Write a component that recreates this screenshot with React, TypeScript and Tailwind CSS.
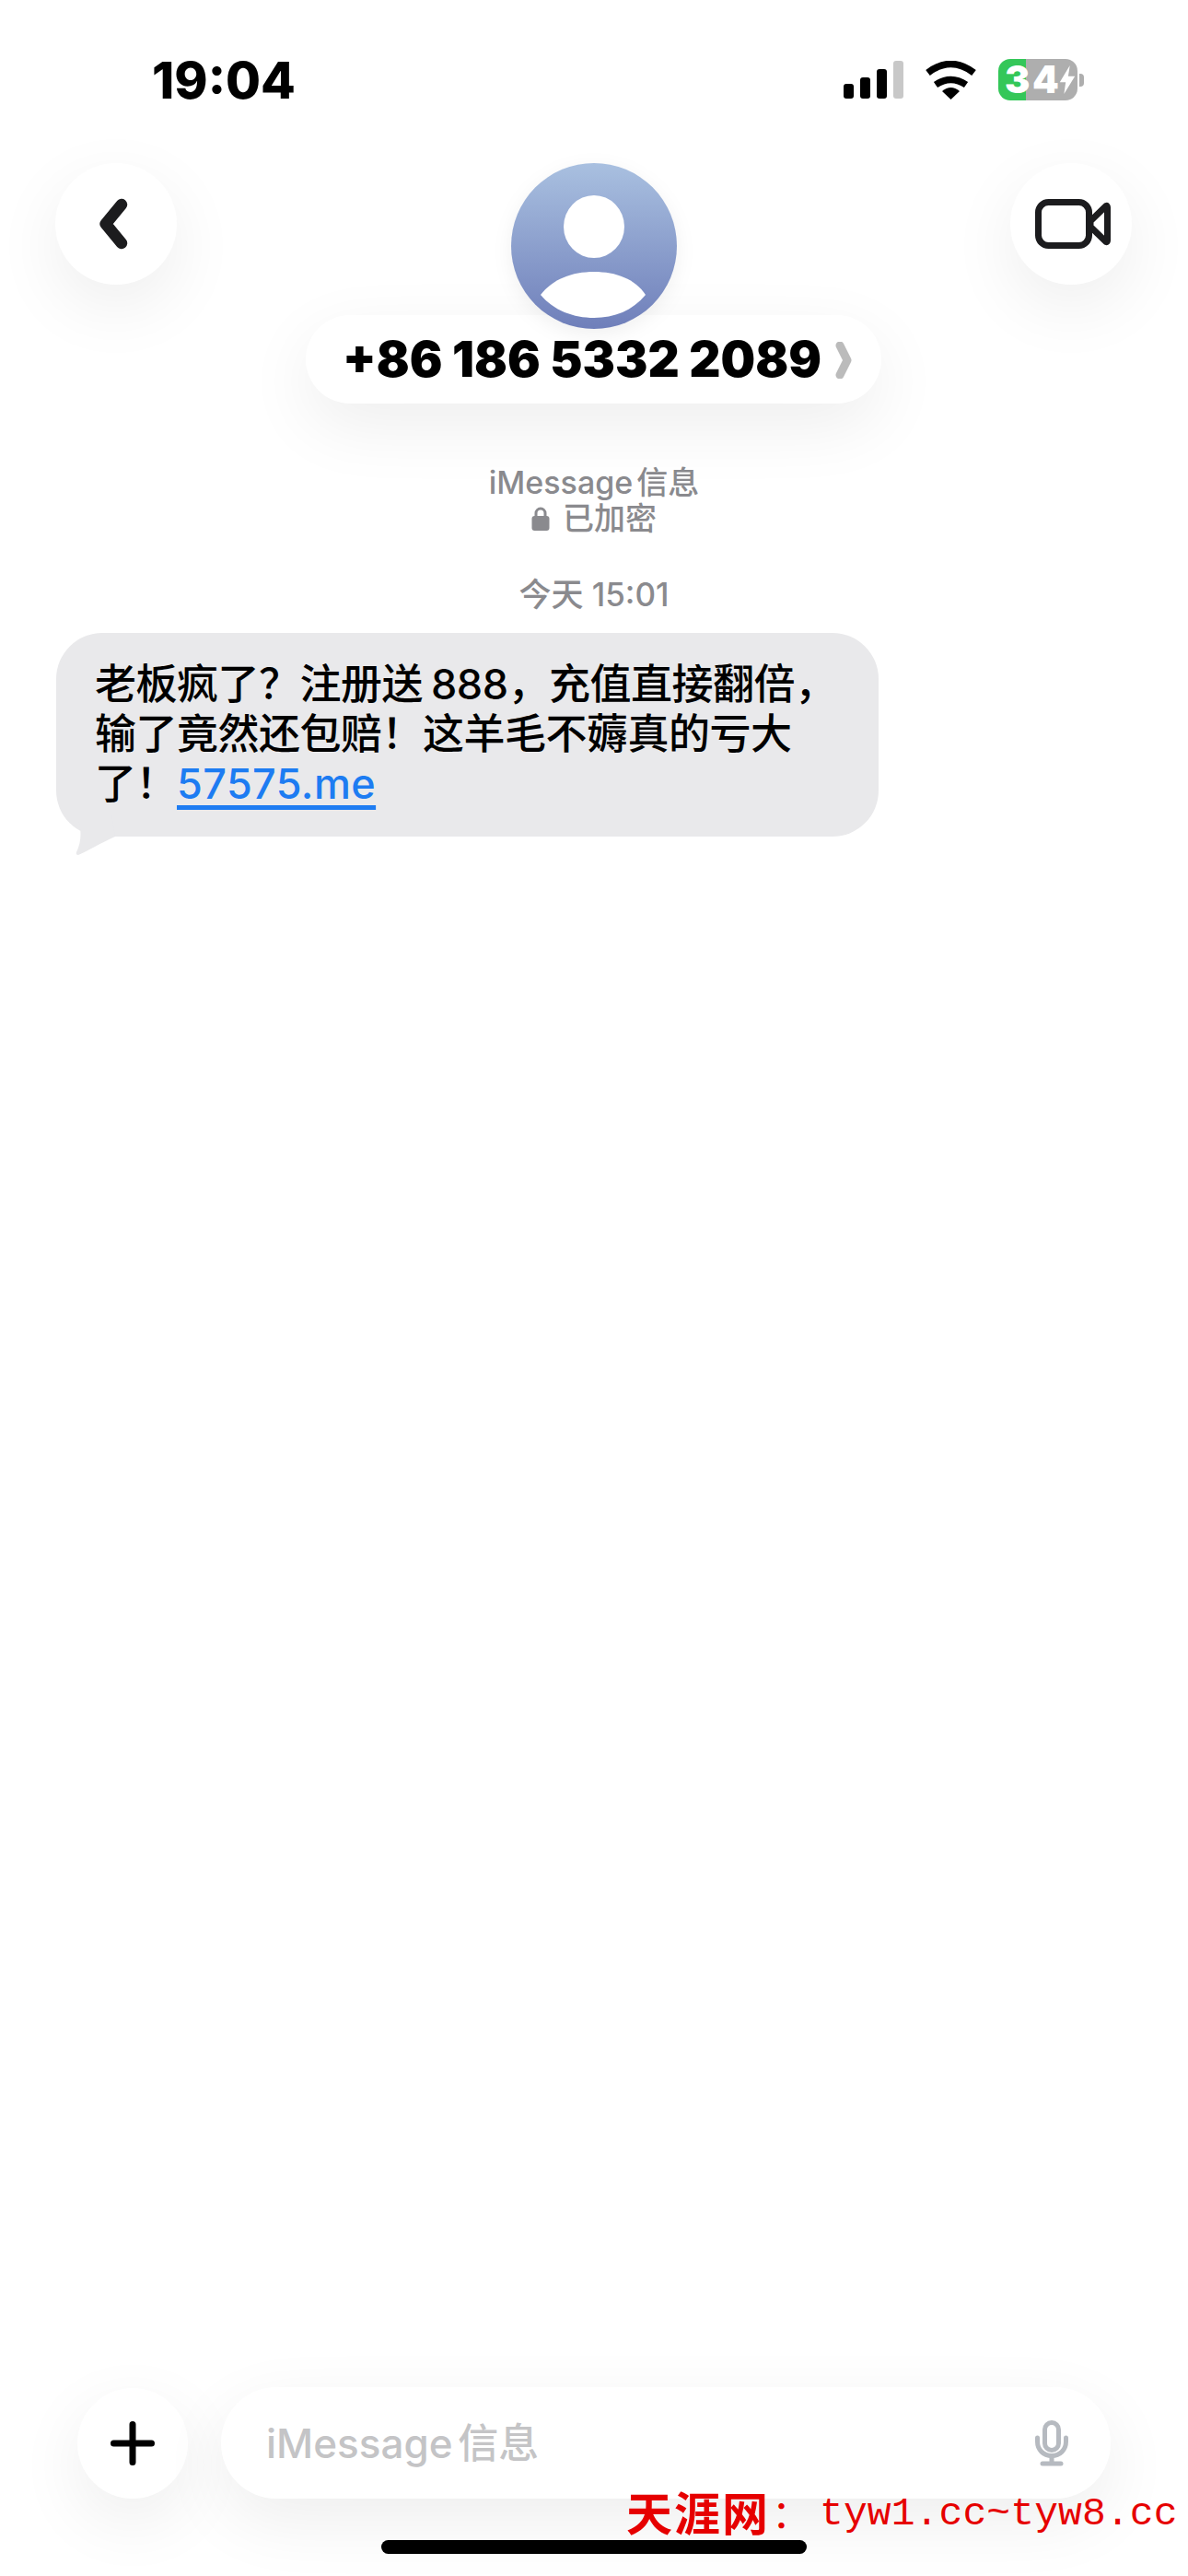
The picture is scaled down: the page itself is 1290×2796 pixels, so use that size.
import React from "react"

const softShadow = "shadow-[0_24px_75px_rgba(0,0,0,0.07)]"

const StatusIcons: React.FC = () => (
  <div className="flex items-center">
    <div className="flex items-end gap-[7px] h-[41px]">
      <div className="w-[11px] h-[16px] rounded-[3px] bg-black" />
      <div className="w-[11px] h-[23px] rounded-[3px] bg-black" />
      <div className="w-[11px] h-[32px] rounded-[3px] bg-black" />
      <div className="w-[11px] h-[41px] rounded-[3px] bg-[#c8c8c8]" />
    </div>
    <svg className="ml-[23px]" width="57" height="42" viewBox="0 0 57 42" fill="none">
      <path d="M3.5 13Q28.5 -6 53.5 13" stroke="#000" strokeWidth="7.5" />
      <path d="M12 26Q28.5 15 45 26" stroke="#000" strokeWidth="7.5" />
      <path d="M28.5 42L19 33Q28.5 25 38 33Z" fill="#000" />
    </svg>
    <div className="ml-[23px] w-[86px] h-[45px] rounded-[13px] bg-[linear-gradient(90deg,#34c759_35%,#aeaeae_35%)] flex items-center pl-[7px] text-white text-[41px] font-black leading-none">
      <span className="w-[30px]">3</span>
      <span className="w-[29px]">4</span>
      <svg width="18" height="31" viewBox="0 0 18 34" fill="#fff">
        <path d="M12 0L0 20H7L5 34L18 13H10Z" />
      </svg>
    </div>
    <div className="ml-[2px] w-[5px] h-[14px] rounded-r-[4px] bg-[#aeaeae]" />
  </div>
)

const Header: React.FC = () => (
  <div className="flex justify-between items-start pl-[60px] pr-[61px]">
    <button className={`w-[132px] h-[132px] rounded-full bg-white flex items-center justify-center ${softShadow}`}>
      <svg className="mr-[4px]" width="40" height="60" viewBox="0 0 40 60" fill="none">
        <path d="M28 9L10.7 30L28 51" stroke="#1c1c1e" strokeWidth="12.5" strokeLinecap="round" strokeLinejoin="round" />
      </svg>
    </button>
    <div className="flex flex-col items-center">
      <svg className="relative z-10 drop-shadow-[0_6px_10px_rgba(0,0,0,0.06)]" width="180" height="180" viewBox="0 0 180 180">
        <defs>
          <linearGradient id="avatarFill" x1="0" y1="0" x2="0" y2="1">
            <stop offset="0" stopColor="#a9c0e0" />
            <stop offset="1" stopColor="#6f7fba" />
          </linearGradient>
        </defs>
        <circle cx="90" cy="90" r="90" fill="url(#avatarFill)" />
        <ellipse cx="90" cy="69" rx="33" ry="34" fill="#fff" />
        <path d="M32 143C45 126 66 118 90 118C114 118 135 126 146 143C132 160 112 168 90 168C68 168 46 160 32 143Z" fill="#fff" />
      </svg>
      <div className={`relative -mt-[15px] w-[625px] h-[96px] rounded-[48px] bg-white flex items-center pl-[40px] ${softShadow}`}>
        <span className="text-[53px] font-black leading-none text-black whitespace-nowrap">
          +86 186 5332 2089
        </span>
        <svg className="absolute left-[574px] top-[29px]" width="20" height="40" viewBox="0 0 20 40" fill="none">
          <path d="M6 4L14 20L6 36" stroke="#bbbbbb" strokeWidth="9" strokeLinecap="round" strokeLinejoin="round" />
        </svg>
      </div>
    </div>
    <button className={`w-[132px] h-[132px] rounded-full bg-white flex items-center justify-center ${softShadow}`}>
      <svg className="ml-[3px]" width="82" height="54" viewBox="0 0 82 54" fill="none" stroke="#1c1c1e" strokeWidth="7" strokeLinejoin="round">
        <rect x="3.5" y="3.5" width="55" height="47" rx="11" />
        <path d="M60 24L77 7.5Q78.5 7 78.5 9V45Q78.5 47 77 46.5L60 30Z" />
      </svg>
    </button>
  </div>
)

const Bubble: React.FC = () => (
  <div className="relative ml-[61px] mt-[22px] w-[893px] rounded-[50px] bg-[#e9e9eb] pl-[42px] pt-[29px] pb-[30px]">
    <p className="text-[45px] leading-[54px] font-medium tracking-[-0.5px] text-black whitespace-nowrap">
      老板疯了？注册送<span className="ml-[9px]">888</span>，充值直接翻倍，
      <br />
      输了竟然还包赔！这羊毛不薅真的亏大
      <br />
      了！<a className="tracking-[0.4px] text-[#1d7cf2] underline decoration-[5px] underline-offset-[7px] [text-decoration-skip-ink:none]">57575.me</a>
    </p>
    <svg className="absolute left-[20px] top-[198px]" width="50" height="44" viewBox="0 0 50 44" fill="#e9e9eb">
      <path d="M2 0C8 12 8 28 2 40Q1 43 4 43C16 38 28 30 44 23L40 0Z" />
    </svg>
  </div>
)

const Composer: React.FC = () => (
  <div className="flex items-center gap-[36px] pl-[84px]">
    <button className={`w-[120px] h-[120px] rounded-full bg-white flex items-center justify-center ${softShadow}`}>
      <svg width="48" height="48" viewBox="0 0 48 48" fill="none" stroke="#000" strokeWidth="7" strokeLinecap="round">
        <path d="M24 3.5V44.5M3.5 24H44.5" />
      </svg>
    </button>
    <div className={`w-[966px] h-[121px] rounded-[60px] bg-white flex items-center justify-between pl-[49px] pr-[46px] ${softShadow}`}>
      <span className="text-[44px] leading-none font-medium text-[#c4c4c6] [word-spacing:-6px]">iMessage 信息</span>
      <svg width="36" height="50" viewBox="0 0 36 50" fill="none" stroke="#b6bac0" strokeLinecap="round">
        <rect x="10.5" y="2.5" width="15" height="30" rx="7.5" strokeWidth="5" />
        <path d="M2.5 19V23C2.5 32 9 38.5 18 38.5C27 38.5 33.5 32 33.5 23V19" strokeWidth="5" />
        <path d="M18 39V46" strokeWidth="5" />
        <path d="M8 47H28" strokeWidth="5" />
      </svg>
    </div>
  </div>
)

const App: React.FC = () => {
  return (
    <div className="relative w-[1290px] h-[2796px] flex flex-col bg-white overflow-hidden font-['Inter','Noto_Sans_CJK_SC',sans-serif]">
      <div className="h-[177px] flex justify-between items-start pl-[165px] pr-[113px] pt-[64px]">
        <span className="text-[55px] leading-[46px] font-extrabold text-black">19:04</span>
        <StatusIcons />
      </div>

      <Header />

      <div className="mt-[66px] flex flex-col items-center text-[#8a8a8e] text-[34px] leading-[39px]">
        <span className="font-medium [word-spacing:-5px]">iMessage 信息</span>
        <span className="flex items-center gap-[14px] font-medium">
          <svg width="20" height="26" viewBox="0 0 20 26" fill="#8a8a8e">
            <path d="M5 11V7a5 5 0 0 1 10 0v4" fill="none" stroke="#8a8a8e" strokeWidth="3" />
            <rect x="0.5" y="10" width="19" height="16" rx="3" />
          </svg>
          已加密
        </span>
      </div>
      <div className="mt-[44px] text-center text-[#8a8a8e] text-[35px] font-medium leading-[39px]">今天 15:01</div>

      <Bubble />

      <div className="mt-auto">
        <Composer />
        <div className="mt-[45px] mb-[24px] mx-auto w-[462px] h-[15px] rounded-full bg-black" />
      </div>

      {/* site watermark stamped over the screenshot */}
      <div className="absolute left-[680px] top-[2706px] flex items-center whitespace-nowrap text-[#e60000]">
        <span className="text-[50px] leading-[46px] font-bold tracking-[2px]">天涯网</span>
        <span className="ml-[2px] w-[52px] text-[42px] leading-[46px]">：</span>
        <span className="font-['Liberation_Mono',monospace] text-[43px] tracking-[0.1px] leading-[46px]">tyw1.cc~tyw8.cc</span>
      </div>
    </div>
  )
}

export default App
